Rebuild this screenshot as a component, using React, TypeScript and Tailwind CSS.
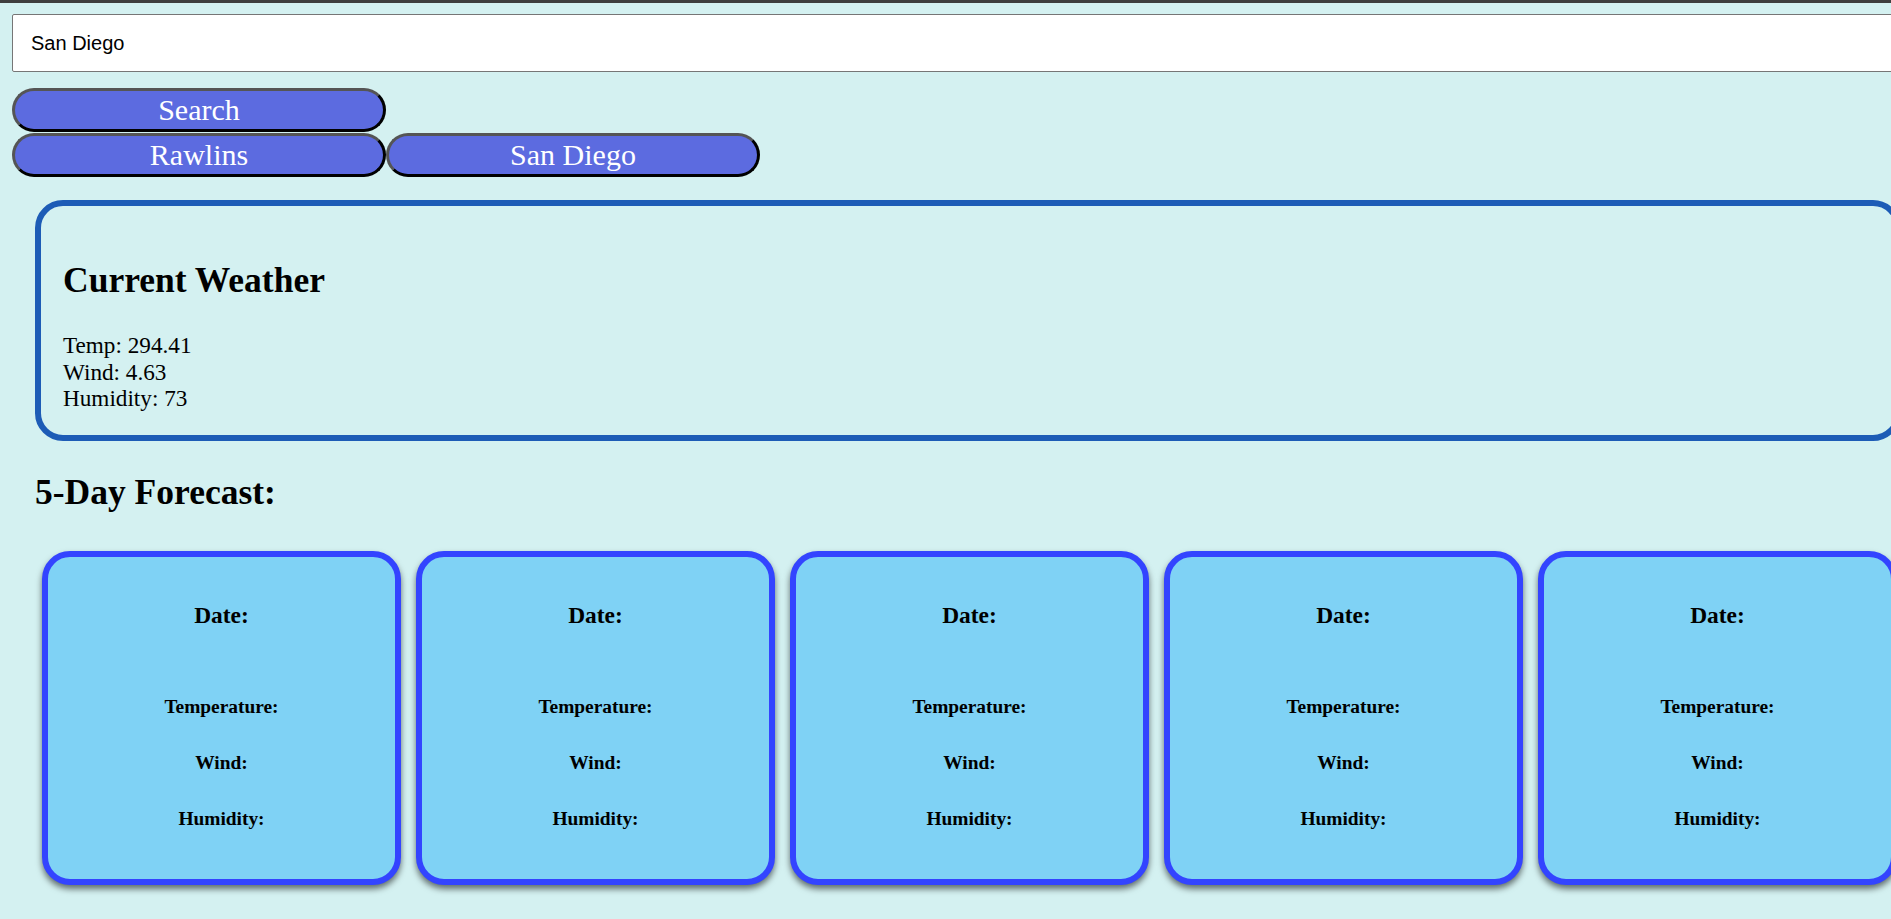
const history = ["Rawlins", "San Diego"];

const current = {
  temp: 294.41,
  wind: 4.63,
  humidity: 73,
};

const serif = "font-['Liberation_Serif','Times_New_Roman',serif]";

function CityButton({ label }: { label: string }) {
  return (
    <button
      className={`w-[374px] h-[44px] shrink-0 rounded-full border-[3px] border-t-[#555] border-l-[#555] border-b-black border-r-black bg-[#5c6be0] text-white text-[30px] leading-none ${serif}`}
    >
      {label}
    </button>
  );
}

function ForecastCard() {
  return (
    <div
      className={`w-[359px] h-[334px] shrink-0 flex flex-col items-center pt-[45px] rounded-[28px] border-[6px] border-[#3344ff] bg-[#7fd2f5] shadow-[0_4px_6px_rgba(0,0,0,0.55)] text-black font-bold ${serif}`}
    >
      <h3 className="text-[23.4px] leading-[27px]">Date:</h3>
      <h4 className="mt-[67px] text-[19.4px] leading-[22px]">Temperature:</h4>
      <h4 className="mt-[34px] text-[19.4px] leading-[22px]">Wind:</h4>
      <h4 className="mt-[34px] text-[19.4px] leading-[22px]">Humidity:</h4>
    </div>
  );
}

export default function App() {
  return (
    <div className="min-h-screen w-full overflow-hidden bg-[#d4f1f1] text-black">
      {/* top edge */}
      <div className="h-[3px] bg-[#3f3f3f]" />

      {/* Search */}
      <div className="mt-[11px] ml-[12px]">
        <input
          defaultValue="San Diego"
          className="w-[1900px] h-[58px] rounded-[2px] border border-[#767676] bg-white pl-[18px] text-[20px] text-black font-['Liberation_Sans',Arial,sans-serif] outline-none"
        />
      </div>

      <div className="mt-[16px] ml-[12px]">
        <div className="flex">
          <CityButton label="Search" />
        </div>
        <div className="flex mt-px">
          {history.map((c) => (
            <CityButton key={c} label={c} />
          ))}
        </div>
      </div>

      {/* Current weather */}
      <section
        className={`mt-[23px] ml-[35px] w-[1866px] shrink-0 rounded-[28px] border-[6px] border-[#1d5cb6] px-[22px] pt-[22px] pb-[23px] ${serif}`}
      >
        <h2 className="mt-[32px] mb-[31px] text-[35.5px] leading-[41px] font-bold">Current Weather</h2>
        <div className="text-[23.2px] leading-[26.5px]">
          <p>Temp: {current.temp}</p>
          <p>Wind: {current.wind}</p>
          <p>Humidity: {current.humidity}</p>
        </div>
      </section>

      {/* Forecast */}
      <h2 className={`mt-[31px] ml-[35px] text-[35.5px] leading-[41px] font-bold ${serif}`}>5-Day Forecast:</h2>
      <div className="mt-[38px] pl-[42px] flex gap-[15px]">
        {[0, 1, 2, 3, 4].map((i) => (
          <ForecastCard key={i} />
        ))}
      </div>
    </div>
  );
}
